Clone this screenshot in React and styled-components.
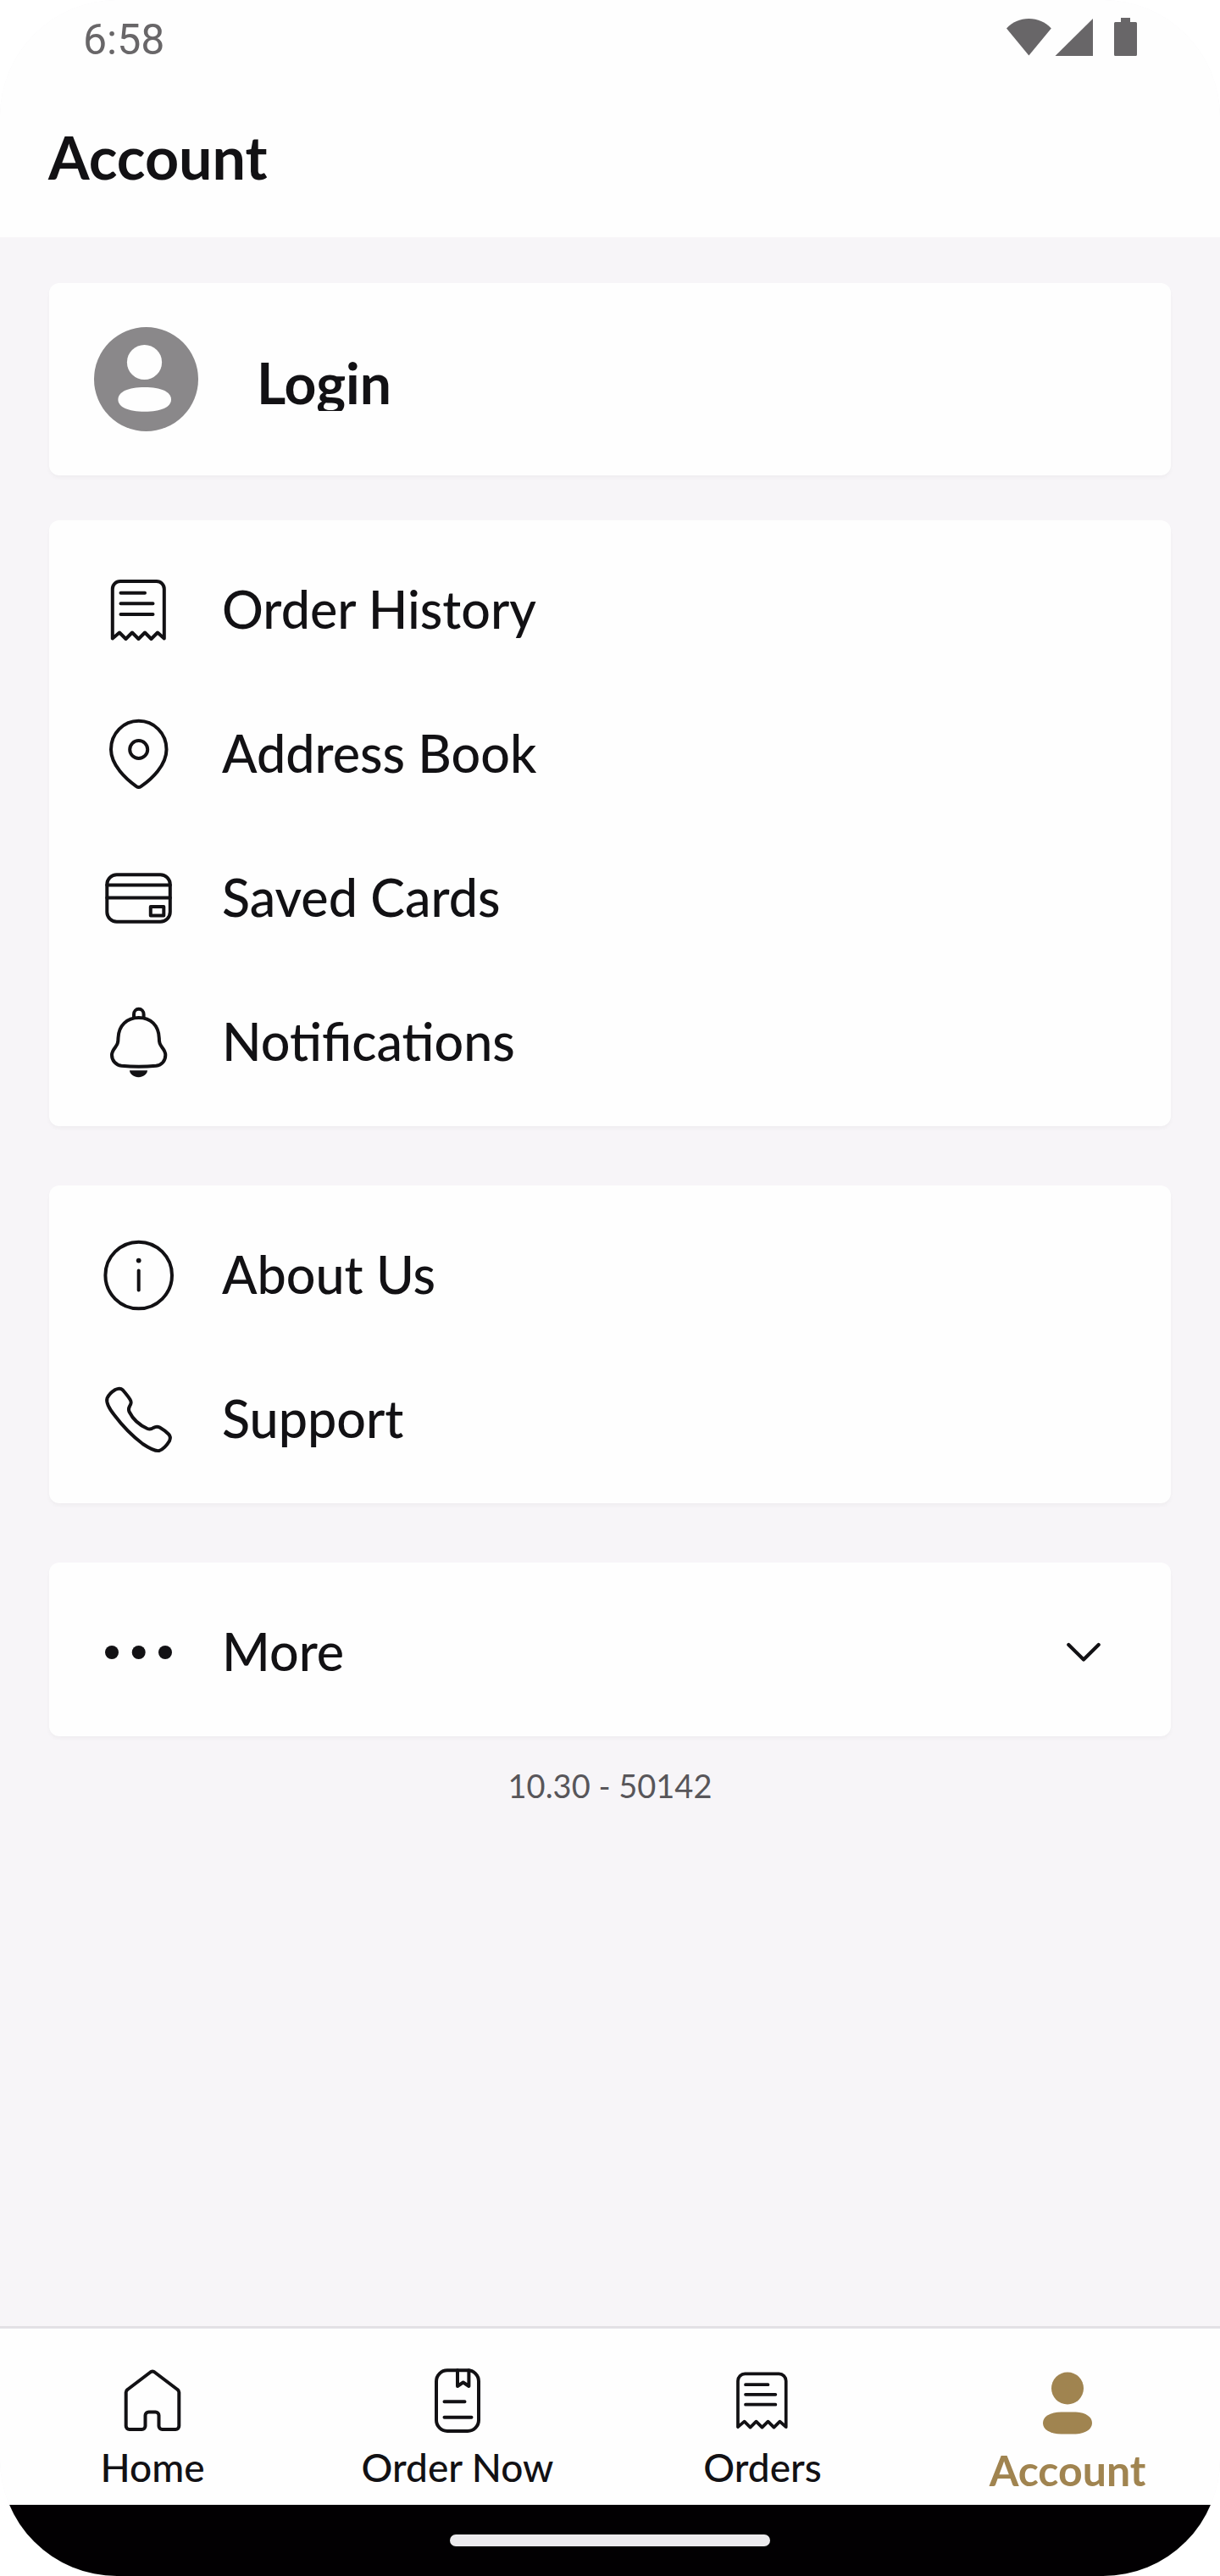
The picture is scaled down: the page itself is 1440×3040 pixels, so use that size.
import { useState } from 'react';
import styled, { createGlobalStyle } from 'styled-components';

function ReceiptIcon() {
  return (
    <>
      <path d="M10.800 75.500V17a9 9 0 0 1 9-9h43a9 9 0 0 1 9 9v58.500l-7.800-7-7.500 7.500-7.500-7.500-7.500 7.500-7.500-7.500-7.500 7.500-7.500-7.500z" />
      <path d="M20.500 21.800h28.500M20.500 34.300h38M20.500 47h38" />
    </>
  );
}

function PinIcon() {
  return (
    <>
      <path d="M41.700 81c-1 0-2-.5-3-1.200C27 71.500 9 55 9 36.500 9 17 24 2.800 41.700 2.800S74.500 17 74.500 36.500C74.500 55 57 71.500 44.700 79.800c-1 .7-2 1.200-3 1.200z" />
      <circle cx="41.700" cy="36.500" r="10.500" />
    </>
  );
}

function CardIcon() {
  return (
    <>
      <rect x="4.300" y="14.300" width="74.500" height="55.400" rx="11.500" />
      <path d="M4.300 26.500h74.500M4.300 41.500h74.500" />
      <rect x="55.800" y="52" width="15.500" height="10.500" />
    </>
  );
}

function BellIcon() {
  return (
    <>
      <path d="M36 13V9a5.800 6.200 0 0 1 11.600 0v4" />
      <path d="M41.800 13c14 0 23.500 9 24 24 0 6 1 7.500 3.500 11 3 4 4 6 4 9 0 7-4.500 12-11 12.800-12 1-29 1-41 0C15 69 10 64 10 57c0-3 1-5 4-9 2.500-3.500 3.500-5 3.500-11C18 22 28 13 41.800 13z" />
      <path d="M31 75.300h21c0 4.200-5 7.900-10.500 7.900s-10.500-3.700-10.500-7.900z" fill="currentColor" stroke="none" />
    </>
  );
}

function InfoIcon() {
  return (
    <>
      <circle cx="41.700" cy="42" r="39.300" />
      <circle cx="41.700" cy="24.600" r="2.900" fill="currentColor" stroke="none" />
      <path d="M41.700 36.500v23" />
    </>
  );
}

function PhoneIcon() {
  return (
    <path d="M14 7C10 9.500 6 13.500 4.500 17 3 22 7 29.500 13 37c9 12 21 24.500 33.500 34 7.500 5 14.500 9 19.500 8 4-1.500 9-6.500 12-11.500 1.500-3.500 1-6-1-8-3-3-7-6-10.500-8-3-1.500-5-1-7.500.5-2.500 1.800-4.500 2-7 1-9-4-17-11-21.500-20-1-2.300-.8-4 .5-6.500 2-3.500 2.300-5 .5-8-2.500-4-5.500-7.500-8.500-11-2.500-2.500-5.500-2.200-9-.5z" />
  );
}

function DotsIcon() {
  return (
    <g fill="currentColor" stroke="none">
      <circle cx="10" cy="42" r="8" />
      <circle cx="41.700" cy="42" r="8" />
      <circle cx="73" cy="42" r="8" />
    </g>
  );
}

function HomeIcon() {
  return (
    <path d="M37.500 6.500a3.500 3.500 0 0 1 5 0L69.500 27a4 4 0 0 1 1.800 3.300V70a4 4 0 0 1-4 4H51.500a4 4 0 0 1-4-4V57.500a4 4 0 0 0-4-4h-8a4 4 0 0 0-4 4V70a4 4 0 0 1-4 4H12.700a4 4 0 0 1-4-4V30.300a4 4 0 0 1 1.800-3.300z" />
  );
}

function MenuBookIcon() {
  return (
    <>
      <rect x="15" y="4.300" width="50" height="71.700" rx="13" />
      <path d="M40 4.300V23l6.700-4.500 6.700 4.500V4.300M24.500 41.300h24M24.500 59.700h32" />
    </>
  );
}

function PersonIcon() {
  return (
    <g fill="currentColor" stroke="none">
      <circle cx="40" cy="25.500" r="19" />
      <path d="M33 53.500h14c14 0 22 5.500 22 13s-8 13-22 13H33c-14 0-22-5.500-22-13s8-13 22-13z" />
    </g>
  );
}

const accountLinks = [
  { label: 'Order History', icon: <ReceiptIcon /> },
  { label: 'Address Book', icon: <PinIcon /> },
  { label: 'Saved Cards', icon: <CardIcon /> },
  { label: 'Notifications', icon: <BellIcon /> },
];

const infoLinks = [
  { label: 'About Us', icon: <InfoIcon /> },
  { label: 'Support', icon: <PhoneIcon /> },
];

const tabs = [
  { label: 'Home', icon: <HomeIcon />, box: '0 0 80 80' },
  { label: 'Order Now', icon: <MenuBookIcon />, box: '0 0 80 80' },
  { label: 'Orders', icon: <ReceiptIcon />, box: '-1 -1 86 86' },
  { label: 'Account', icon: <PersonIcon />, box: '0 0 80 80', active: true },
];

function MenuLinks({ items }) {
  return (
    <MenuCard>
      {items.map((item) => (
        <MenuLink key={item.label} href="#">
          <MenuIcon viewBox="0 0 84 84">{item.icon}</MenuIcon>
          <MenuLabel>{item.label}</MenuLabel>
        </MenuLink>
      ))}
    </MenuCard>
  );
}

export default function App() {
  const [moreOpen, setMoreOpen] = useState(false);

  return (
    <>
      <GlobalStyle />
      <Screen>
        <StatusBar>
          <Time>6:58</Time>
          <StatusIcons viewBox="0 0 154 46" aria-hidden="true">
            <path d="M0 12.500C7 5 16 1 26.400 1s19.400 4 26.400 11.500L26.400 44.500z" />
            <path d="M102 1v44H57.500z" />
            <path d="M135 0h11v5h6.500q1.500 0 1.500 1.500v37q0 1.500-1.500 1.500h-24q-1.500 0-1.500-1.500v-37q0-1.500 1.500-1.500h6.500z" />
          </StatusIcons>
        </StatusBar>
        <Header>
          <Title>Account</Title>
        </Header>

        <Main>
          <LoginCard href="#">
            <Avatar viewBox="0 0 123 123" aria-hidden="true">
              <circle cx="61.500" cy="61.500" r="61.500" fill="#8a888a" />
              <circle cx="59.500" cy="41.500" r="20.600" fill="#fefefe" />
              <path
                d="M59.700 71c19.500 0 31.300 5.500 31.300 14.400s-11.800 14.300-31.300 14.300-31.300-5.400-31.300-14.300S40.200 71 59.700 71z"
                fill="#fefefe"
              />
            </Avatar>
            <LoginText>Login</LoginText>
          </LoginCard>

          <MenuLinks items={accountLinks} />
          <MenuLinks items={infoLinks} />

          <MenuCard>
            <MoreButton type="button" aria-expanded={moreOpen} onClick={() => setMoreOpen(!moreOpen)}>
              <MenuIcon viewBox="0 0 84 84">
                <DotsIcon />
              </MenuIcon>
              <MenuLabel>More</MenuLabel>
              <Chevron viewBox="0 0 40 24" $open={moreOpen}>
                <path d="M2.300 3 20 20.500 37.700 3" />
              </Chevron>
            </MoreButton>
          </MenuCard>
          <Version>10.30 - 50142</Version>
        </Main>

        <TabBar>
          {tabs.map((tab) => (
            <Tab key={tab.label} href="#" $active={tab.active} aria-current={tab.active ? 'page' : undefined}>
              <TabIcon viewBox={tab.box}>{tab.icon}</TabIcon>
              <TabLabel $active={tab.active}>{tab.label}</TabLabel>
            </Tab>
          ))}
        </TabBar>
        <GestureBar>
          <GestureHandle />
        </GestureBar>
      </Screen>
    </>
  );
}

const GlobalStyle = createGlobalStyle`
  * {
    box-sizing: border-box;
  }
  body {
    margin: 0;
    background-color: #fff;
    color: #121114;
    font-family: Lato, 'Open Sans', sans-serif;
  }
  a {
    color: inherit;
    text-decoration: none;
  }
`;

const Screen = styled.div`
  min-height: 100vh;
  display: flex;
  flex-direction: column;
  background-color: #f7f5f8;
  border-radius: 138px;
  overflow: hidden;
`;
const StatusBar = styled.div`
  height: 88px;
  padding: 0 98px;
  display: flex;
  justify-content: space-between;
  align-items: center;
  background-color: #fefefe;
  color: #686668;
`;
const Time = styled.span`
  padding-top: 5px;
  font-family: Roboto, sans-serif;
  font-size: 50px;
`;
const StatusIcons = styled.svg`
  width: 154px;
  height: 46px;
  fill: currentColor;
`;
const Header = styled.header`
  height: 192px;
  padding: 2px 57px 0;
  display: flex;
  align-items: center;
  background-color: #fefefe;
`;
const Title = styled.h1`
  margin: 0;
  font-size: 70px;
  font-weight: 700;
`;
const Main = styled.main`
  flex: 1;
  padding: 54px 58px 0;
  display: flex;
  flex-direction: column;
`;
const Card = styled.section`
  background-color: #fefefe;
  border-radius: 12px;
  box-shadow: 0 3px 4px rgba(40, 35, 45, 0.03);
`;
const LoginCard = styled(Card).attrs({ as: 'a' })`
  height: 227px;
  margin-bottom: 53px;
  padding: 0 53px;
  display: flex;
  align-items: center;
  gap: 69px;
`;
const Avatar = styled.svg`
  width: 123px;
  height: 123px;
`;
const LoginText = styled.span`
  height: 74px;
  overflow: hidden;
  font-size: 66px;
  font-weight: 700;
  line-height: 82px;
`;
const MenuCard = styled(Card)`
  padding: 21px 0 14px;

  & + & {
    margin-top: 70px;
  }
`;
const MenuLink = styled.a`
  width: 100%;
  height: 170px;
  padding: 0 83px 0 64px;
  display: flex;
  align-items: center;
  gap: 56px;
`;
const MoreButton = styled(MenuLink).attrs({ as: 'button' })`
  border: none;
  background: none;
  color: inherit;
  font: inherit;
  text-align: left;
  cursor: pointer;
`;
const MenuIcon = styled.svg.attrs({ 'aria-hidden': true })`
  width: 84px;
  height: 84px;
  flex-shrink: 0;
  fill: none;
  stroke: currentColor;
  stroke-width: 4;
  stroke-linecap: round;
  stroke-linejoin: round;
`;
const MenuLabel = styled.span`
  flex: 1;
  padding-bottom: 4px;
  font-size: 61px;
  font-weight: 500;
`;
const Chevron = styled.svg.attrs({ 'aria-hidden': true })`
  width: 40px;
  height: 24px;
  fill: none;
  stroke: currentColor;
  stroke-width: 4.2;
  stroke-linecap: round;
  stroke-linejoin: round;
  transform: ${({ $open }) => ($open ? 'rotate(180deg)' : 'none')};
`;
const Version = styled.p`
  margin: 35px 0 0;
  color: #58565a;
  font-size: 38px;
  line-height: 46px;
  text-align: center;
`;
const TabBar = styled.nav`
  height: 211px;
  padding-top: 45px;
  display: grid;
  grid-template-columns: repeat(4, 1fr);
  border-top: 3px solid #e3e1e5;
  background-color: #fefefe;
`;
const Tab = styled.a`
  display: flex;
  flex-direction: column;
  align-items: center;
  gap: 10px;
  color: ${({ $active }) => ($active ? '#a08450' : 'inherit')};
`;
const TabIcon = styled(MenuIcon)`
  width: 80px;
  height: 80px;
`;
const TabLabel = styled.span`
  font-size: ${({ $active }) => ($active ? '50px' : '46px')};
  font-weight: ${({ $active }) => ($active ? 700 : 500)};
  line-height: ${({ $active }) => ($active ? '64px' : '58px')};
  white-space: nowrap;
`;
const GestureBar = styled.div`
  height: 84px;
  display: flex;
  justify-content: center;
  align-items: center;
  background-color: #020002;
`;
const GestureHandle = styled.div`
  width: 378px;
  height: 14px;
  border-radius: 7px;
  background-color: #eceaed;
`;
